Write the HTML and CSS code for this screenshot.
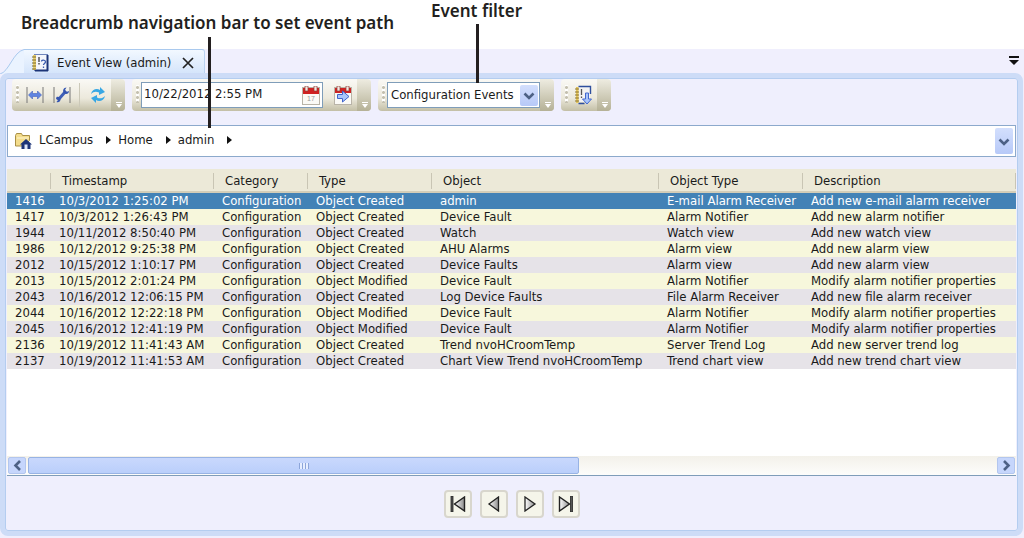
FILE: index.html
```html
<!DOCTYPE html>
<html lang="en">
<head>
    <meta charset="UTF-8">
    <meta name="viewport" content="width=device-width, initial-scale=1.0">
    <title>Event View (admin)</title>
    <link rel="stylesheet" href="styles.css">
</head>
<body>
    <div class="callouts">
        <div class="callout callout-path">Breadcrumb navigation bar to set event path</div>
        <div class="callout-line line-path"></div>
        <div class="callout callout-filter">Event filter</div>
        <div class="callout-line line-filter"></div>
    </div>

    <div class="window">
        <div class="tab-strip">
            <svg class="tab-slope" viewBox="0 0 24 25" width="24" height="25">
                <path d="M0 25 C9 23 13 3 24 0.5 V25 Z" fill="#eaf3ff"/>
                <path d="M0 25 C9 23 13 3 24 0.5" fill="none" stroke="#a9c9ee"/>
            </svg>
            <div class="tab">
                <svg width="17" height="19" viewBox="0 0 17 19">
                    <rect x="2.5" y="1.5" width="13" height="16" fill="#f4f6fc" stroke="#6f86bd"/>
                    <path d="M3 17.5h13M15.5 2v16" stroke="#1c3478" stroke-width="2"/>
                    <path d="M1 2h3v15h-3z" fill="#e8cf70"/>
                    <path d="M0 4h4M0 7h4M0 10h4M0 13h4M0 16h4" stroke="#7a6a2c"/>
                    <path d="M7 4v5M7 10v1.500" stroke="#555" stroke-width="1.500"/>
                    <path d="M9.500 8.500c0-2 4-2 4 .3 0 1.700-2 1.700-2 3.200M11.500 13.500v1.500" fill="none" stroke="#3c5db0" stroke-width="1.300"/>
                </svg>
                <span class="tab-title">Event View (admin)</span>
                <button class="tab-close" aria-label="Close tab">
                    <svg width="12" height="12" viewBox="0 0 12 12"><path d="M1 1l10 10M11 1L1 11" stroke="#222" stroke-width="1.700"/></svg>
                </button>
            </div>
            <button class="tab-menu" aria-label="Tab list">
                <svg width="10" height="10" viewBox="0 0 10 10"><path d="M0 0h10v2H0zM0 4h10L5 9z" fill="#111"/></svg>
            </button>
        </div>

        <div class="panel">
            <div class="toolbars">
                <div class="toolbar">
                    <span class="grip"></span>
                    <div class="tools">
                        <button class="tool" aria-label="Fit time range">
                            <svg width="18" height="18" viewBox="0 0 18 18">
                                <path d="M1 1v16M17 1v16" stroke="#777"/>
                                <path d="M2.500 9l4-4v2.500h5V5l4 4-4 4v-2.500h-5V13z" fill="#5f84e0" stroke="#4361bd" stroke-width=".6"/>
                            </svg>
                        </button>
                        <button class="tool" aria-label="Configure range">
                            <svg width="18" height="18" viewBox="0 0 18 18">
                                <path d="M1 1v16M17 1v16" stroke="#777"/>
                                <path d="M5 14L13 5" stroke="#3f5fb6" stroke-width="3"/>
                                <path d="M13.500 1.500c-3 .3-4 2.500-3 5l2 1.500c2 .3 3.500-.8 3.500-3l-2.500 1-1.500-2zM3.500 11c2-.5 4 .5 4 2.500s-2 3.500-4 2.500l1.500-2-2-1z" fill="#3555b0"/>
                            </svg>
                        </button>
                        <span class="divider"></span>
                        <button class="tool" aria-label="Refresh">
                            <svg width="18" height="18" viewBox="0 0 18 18">
                                <path d="M2 8c1-5 6-6 9-4V1l5 5-6 3V6.500C7 5 4.500 5.500 2 8z" fill="#37a7e4"/>
                                <path d="M16 10c-1 5-6 6-9 4v3l-5-5 6-3v2.500c3 1.500 5.500 1 8-1.500z" fill="#37a7e4"/>
                            </svg>
                        </button>
                    </div>
                    <button class="overflow" aria-label="More"></button>
                </div>

                <div class="toolbar">
                    <span class="grip"></span>
                    <div class="tools">
                        <div class="date-box">
                            <input class="date-input" type="text" value="10/22/2012 2:55 PM" aria-label="Date and time">
                            <button class="date-button" aria-label="Open calendar">
                                <svg width="18" height="19" viewBox="0 0 18 19">
                                    <rect x=".5" y="1.500" width="17" height="17" fill="#fbfaf6" stroke="#b9b4a8"/>
                                    <path d="M1 2h16v6H1z" fill="#cf2222"/>
                                    <path d="M3 0h3v5H3zM12 0h3v5h-3z" fill="#f4e8e2" stroke="#8d3a34" stroke-width=".7"/>
                                    <text x="9" y="15" class="day">17</text>
                                </svg>
                            </button>
                        </div>
                        <button class="tool tool-go" aria-label="Go to date">
                            <svg width="18" height="19" viewBox="0 0 18 19">
                                <rect x=".5" y="1.500" width="17" height="17" fill="#fbfaf6" stroke="#b9b4a8"/>
                                <path d="M1 2h16v5H1z" fill="#cf2222"/>
                                <path d="M3 0h3v5H3zM12 0h3v5h-3z" fill="#f4e8e2" stroke="#8d3a34" stroke-width=".7"/>
                                <path d="M3.500 8.500h5V5l6.500 5.500L8.500 16v-3.500h-5z" fill="#a9c6fa" stroke="#3f63cc"/>
                            </svg>
                        </button>
                    </div>
                    <button class="overflow" aria-label="More"></button>
                </div>

                <div class="toolbar">
                    <span class="grip"></span>
                    <div class="tools">
                        <div class="filter-box">
                            <select class="filter-select" aria-label="Event filter">
                                <option>Configuration Events</option>
                            </select>
                            <svg class="drop-arrow" width="18" height="21" viewBox="0 0 18 21"><path d="M4.500 8.500l4.500 4.500 4.500-4.500" fill="none" stroke="#4d6185" stroke-width="2.600"/></svg>
                        </div>
                    </div>
                    <button class="overflow" aria-label="More"></button>
                </div>

                <div class="toolbar">
                    <span class="grip"></span>
                    <div class="tools">
                        <button class="tool" aria-label="Export events">
                            <svg width="18" height="20" viewBox="0 0 18 20">
                                <path d="M4 2h11v15H4z" fill="#f3f3f3"/>
                                <path d="M1 2h2.500v16H1z" fill="#e5c65c"/>
                                <path d="M0 4h4M0 7h4M0 10h4M0 13h4M0 16h4" stroke="#8a7430"/>
                                <path d="M3.500 1.500h12V9M3.500 18.500h6" fill="none" stroke="#2f4f9e" stroke-width="1.400"/>
                                <path d="M6.500 4v6M6.500 11.500V13" stroke="#555" stroke-width="1.300"/>
                                <path d="M10.500 8h3v6h3L12 19l-4.500-5h3z" fill="#a9c4f8" stroke="#4368cf"/>
                            </svg>
                        </button>
                    </div>
                    <button class="overflow" aria-label="More"></button>
                </div>
            </div>

            <nav class="breadcrumb" aria-label="Event path">
                <svg width="17" height="18" viewBox="0 0 17 18">
                    <path d="M.5 3.500l1-2h5l1 2h7v5L9 14H.5z" fill="#f3dc8b" stroke="#a98f45"/>
                    <path d="M2 6h12" stroke="#fff6cf"/>
                    <path d="M11 7l6 5.500h-1.500V17h-9v-4.500H5z" fill="#1d3478"/>
                    <path d="M9.500 12.500h3V17h-3z" fill="#dfe6f7"/>
                </svg>
                <a class="crumb" href="#">LCampus</a>
                <a class="crumb" href="#">Home</a>
                <a class="crumb" href="#">admin</a>
                <button class="crumb-drop" aria-label="Path history">
                    <svg width="18" height="21" viewBox="0 0 18 21"><path d="M4.500 8.500l4.500 4.500 4.500-4.500" fill="none" stroke="#4d6185" stroke-width="2.600"/></svg>
                </button>
            </nav>

            <div class="grid">
                <table class="events">
                    <colgroup>
                        <col class="col-id">
                        <col class="col-time">
                        <col class="col-category">
                        <col class="col-type">
                        <col class="col-object">
                        <col class="col-object-type">
                        <col>
                    </colgroup>
                    <thead>
                        <tr><th></th><th>Timestamp</th><th>Category</th><th>Type</th><th>Object</th><th>Object Type</th><th>Description</th></tr>
                    </thead>
                    <tbody>
                        <tr class="selected"><td>1416</td><td>10/3/2012 1:25:02 PM</td><td>Configuration</td><td>Object Created</td><td>admin</td><td>E-mail Alarm Receiver</td><td>Add new e-mail alarm receiver</td></tr>
                        <tr><td>1417</td><td>10/3/2012 1:26:43 PM</td><td>Configuration</td><td>Object Created</td><td>Device Fault</td><td>Alarm Notifier</td><td>Add new alarm notifier</td></tr>
                        <tr><td>1944</td><td>10/11/2012 8:50:40 PM</td><td>Configuration</td><td>Object Created</td><td>Watch</td><td>Watch view</td><td>Add new watch view</td></tr>
                        <tr><td>1986</td><td>10/12/2012 9:25:38 PM</td><td>Configuration</td><td>Object Created</td><td>AHU Alarms</td><td>Alarm view</td><td>Add new alarm view</td></tr>
                        <tr><td>2012</td><td>10/15/2012 1:10:17 PM</td><td>Configuration</td><td>Object Created</td><td>Device Faults</td><td>Alarm view</td><td>Add new alarm view</td></tr>
                        <tr><td>2013</td><td>10/15/2012 2:01:24 PM</td><td>Configuration</td><td>Object Modified</td><td>Device Fault</td><td>Alarm Notifier</td><td>Modify alarm notifier properties</td></tr>
                        <tr><td>2043</td><td>10/16/2012 12:06:15 PM</td><td>Configuration</td><td>Object Created</td><td>Log Device Faults</td><td>File Alarm Receiver</td><td>Add new file alarm receiver</td></tr>
                        <tr><td>2044</td><td>10/16/2012 12:22:18 PM</td><td>Configuration</td><td>Object Modified</td><td>Device Fault</td><td>Alarm Notifier</td><td>Modify alarm notifier properties</td></tr>
                        <tr><td>2045</td><td>10/16/2012 12:41:19 PM</td><td>Configuration</td><td>Object Modified</td><td>Device Fault</td><td>Alarm Notifier</td><td>Modify alarm notifier properties</td></tr>
                        <tr><td>2136</td><td>10/19/2012 11:41:43 AM</td><td>Configuration</td><td>Object Created</td><td>Trend nvoHCroomTemp</td><td>Server Trend Log</td><td>Add new server trend log</td></tr>
                        <tr><td>2137</td><td>10/19/2012 11:41:53 AM</td><td>Configuration</td><td>Object Created</td><td>Chart View Trend nvoHCroomTemp</td><td>Trend chart view</td><td>Add new trend chart view</td></tr>
                    </tbody>
                </table>

                <div class="scrollbar">
                    <button class="scroll-button" aria-label="Scroll left">
                        <svg width="9" height="11" viewBox="0 0 9 11"><path d="M7 1L2.500 5.500 7 10" fill="none" stroke="#4d6185" stroke-width="2.600"/></svg>
                    </button>
                    <div class="scroll-track">
                        <div class="scroll-thumb"><span class="thumb-grip"></span></div>
                    </div>
                    <button class="scroll-button" aria-label="Scroll right">
                        <svg width="9" height="11" viewBox="0 0 9 11"><path d="M2 1l4.500 4.500L2 10" fill="none" stroke="#4d6185" stroke-width="2.600"/></svg>
                    </button>
                </div>
            </div>

            <div class="pager">
                <svg class="defs" width="0" height="0">
                    <linearGradient id="steel" x1="0" x2="1"><stop offset="0" stop-color="#ffffff"/><stop offset="1" stop-color="#8c8c8c"/></linearGradient>
                </svg>
                <button class="page-button" aria-label="First page">
                    <svg width="16" height="16" viewBox="0 0 16 16"><path d="M1 0h2v16H1z" fill="#555" stroke="#222" stroke-width=".8"/><path d="M14.500 1v14L4.500 8z" fill="url(#steel)" stroke="#222" stroke-width="1.400"/></svg>
                </button>
                <button class="page-button" aria-label="Previous page">
                    <svg width="16" height="16" viewBox="0 0 16 16"><path d="M12.500 1v14L3 8z" fill="url(#steel)" stroke="#222" stroke-width="1.300"/></svg>
                </button>
                <button class="page-button" aria-label="Next page">
                    <svg width="16" height="16" viewBox="0 0 16 16"><path d="M3 1v14l10-7z" fill="url(#steel)" stroke="#222" stroke-width="1.300"/></svg>
                </button>
                <button class="page-button" aria-label="Last page">
                    <svg width="16" height="16" viewBox="0 0 16 16"><path d="M1.500 1v14l10-7z" fill="url(#steel)" stroke="#222" stroke-width="1.400"/><path d="M12.500 0h2v16h-2z" fill="#555" stroke="#222" stroke-width=".8"/></svg>
                </button>
            </div>
        </div>
    </div>
</body>
</html>
```

FILE: styles.css
```css
* {
    box-sizing: border-box;
}

body {
    margin: 0;
    min-height: 100vh;
    display: flex;
    flex-direction: column;
    position: relative;
    background-color: #fff;
    color: #1a1a1a;
    font-family: "DejaVu Sans Condensed", "Noto Sans", sans-serif;
    font-size: 13px;
    line-height: 16px;
}

button {
    padding: 0;
    border: none;
    background: none;
    cursor: pointer;
}

svg {
    display: block;
    flex: none;
}

/* callouts over the window */
.callouts {
    height: 49px;
}

.callout {
    position: absolute;
    color: #231f20;
    font-family: "Noto Sans", sans-serif;
    font-size: 17px;
    font-weight: 600;
    line-height: 22px;
    white-space: nowrap;
}

.callout-path { left: 21px; top: 12px; }
.callout-filter { left: 431px; top: 0; }

.callout-line {
    position: absolute;
    z-index: 1;
    width: 3px;
    background-color: #231f20;
}

.line-path { left: 208px; top: 37px; height: 91px; }
.line-filter { left: 476px; top: 24px; height: 59px; }

.window {
    flex: 1;
    display: flex;
    flex-direction: column;
    padding-bottom: 2px;
    background-color: #f0effd;
}

.tab-strip {
    display: flex;
    height: 24px;
}

.tab {
    display: flex;
    align-items: center;
    gap: 8px;
    padding: 2px 10px 0 8px;
    border-top: 1px solid #a9c9ee;
    border-right: 1px solid #b9d2f1;
    border-radius: 0 3px 0 0;
    background: linear-gradient(#f2f8ff, #d5e5fb);
}

.tab-close {
    margin-left: 3px;
}

.tab-menu {
    margin: 0 5px 0 auto;
}

.panel {
    flex: 1;
    display: flex;
    flex-direction: column;
    margin-right: 1px;
    border: 5px solid #cddcf7;
    border-radius: 8px;
    background-color: #efeffd;
    box-shadow: inset 0 0 0 1px #b4cdf0;
    padding: 1px 2px 0;
}

.toolbars {
    display: flex;
    gap: 7px;
    padding-left: 5px;
}

.toolbar {
    display: flex;
    height: 32px;
    border-radius: 4px;
    background: linear-gradient(#faf9f5, #ece9dc 60%, #c3bfa6);
}

.grip {
    width: 3px;
    margin: 6px 2px 8px 4px;
    background: radial-gradient(circle, #c4c0af 1px, #fff 2px) 0 0 / 3px 5px;
}

.tools {
    display: flex;
    align-items: center;
}

.tool {
    display: flex;
    align-items: center;
    justify-content: center;
    width: 27px;
    height: 26px;
}

.divider {
    width: 1px;
    height: 24px;
    margin: 0 4px;
    background-color: #cbc8b8;
}

.overflow {
    position: relative;
    width: 14px;
    border-radius: 0 4px 4px 0;
    background: linear-gradient(#eeece1, #b5b196);
}

.overflow::before,
.overflow::after {
    content: "";
    position: absolute;
    right: 3px;
    bottom: 8px;
    width: 6px;
    height: 1px;
    background-color: #fff;
}

.overflow::after {
    bottom: 3px;
    height: 4px;
    clip-path: polygon(0 0, 100% 0, 50% 100%);
}

.date-box,
.filter-box {
    display: flex;
    align-items: center;
    height: 26px;
    border: 1px solid #7f9db9;
    background-color: #fff;
}

.date-box {
    width: 182px;
    padding: 0 2px;
}

.date-input {
    flex: 1;
    min-width: 0;
    height: 22px;
    padding: 0 0 4px;
    border: none;
    outline: none;
    background: none;
    color: inherit;
    font: inherit;
}

.day {
    fill: #999;
    font-size: 7px;
    text-anchor: middle;
}

.tool-go {
    margin: 0 1px 0 6px;
}

.filter-box {
    position: relative;
    width: 153px;
}

.filter-select {
    appearance: none;
    width: 100%;
    height: 24px;
    padding: 0 20px 0 3px;
    border: none;
    background: none;
    color: inherit;
    font: inherit;
}

.drop-arrow {
    position: absolute;
    right: 1px;
    pointer-events: none;
}

.drop-arrow,
.crumb-drop {
    border-radius: 2px;
    background: linear-gradient(#d3dffd, #b7c9f8);
}

.breadcrumb {
    display: flex;
    align-items: center;
    height: 32px;
    margin-top: 14px;
    padding: 0 2px 0 7px;
    border: 1px solid #8ca9cc;
    background-color: #fff;
}

.crumb {
    display: flex;
    align-items: center;
    margin-left: 7px;
    padding-bottom: 2px;
    color: inherit;
    text-decoration: none;
}

.crumb::after {
    content: "";
    margin-left: 13px;
    border: 4px solid transparent;
    border-left: 5px solid #111;
    border-right: none;
}

.crumb-drop {
    display: flex;
    align-items: center;
    height: 26px;
    margin-left: auto;
}

.grid {
    flex: 1;
    display: flex;
    flex-direction: column;
    justify-content: space-between;
    margin-top: 12px;
    border-bottom: 1px solid #7f9db9;
    background-color: #fff;
}

.events {
    width: 100%;
    table-layout: fixed;
    border-collapse: collapse;
    white-space: nowrap;
}

.col-id { width: 44px; }
.col-time { width: 163px; }
.col-category { width: 94px; }
.col-type { width: 124px; }
.col-object { width: 227px; }
.col-object-type { width: 144px; }

.events th {
    height: 24px;
    padding: 0 11px;
    background: linear-gradient(#c9c5b4, #c9c5b4) right center / 1px 16px no-repeat #ece9d8;
    box-shadow: inset 0 -2px #d3cdb8;
    font-weight: normal;
    text-align: left;
}

.events td {
    height: 16px;
    padding: 0 8px;
}

.events tbody tr:nth-child(even) { background-color: #f7f7dc; }
.events tbody tr:nth-child(odd) { background-color: #e6e3e8; }

.events tbody tr.selected:nth-child(n) {
    background-color: #4382b6;
    color: #fff;
}

.scrollbar {
    display: flex;
    height: 19px;
    padding: 1px;
    background: linear-gradient(#f3f1ea, #fdfdfb);
}

.scroll-button {
    display: flex;
    align-items: center;
    justify-content: center;
    width: 18px;
    border: 1px solid #b3c6ee;
    border-radius: 2px;
    background-color: #c6d6fc;
}

.scroll-track {
    flex: 1;
    padding: 0 2px;
}

.scroll-thumb {
    display: flex;
    align-items: center;
    justify-content: center;
    width: 57%;
    height: 17px;
    border: 1px solid #98b3e4;
    border-radius: 2px;
    background: linear-gradient(#c9d8fd, #bacffb);
}

.thumb-grip {
    width: 10px;
    height: 6px;
    background: repeating-linear-gradient(90deg, #8ca5da 0 1px, #e6eeff 1px 3px);
}

.pager {
    display: flex;
    justify-content: center;
    gap: 8px;
    padding: 14px 0 13px;
}

.page-button {
    display: flex;
    align-items: center;
    justify-content: center;
    width: 28px;
    height: 28px;
    border: 2px solid #d8d6cd;
    border-radius: 4px;
    background-color: #f5f5ea;
}

.defs {
    position: absolute;
}
```
